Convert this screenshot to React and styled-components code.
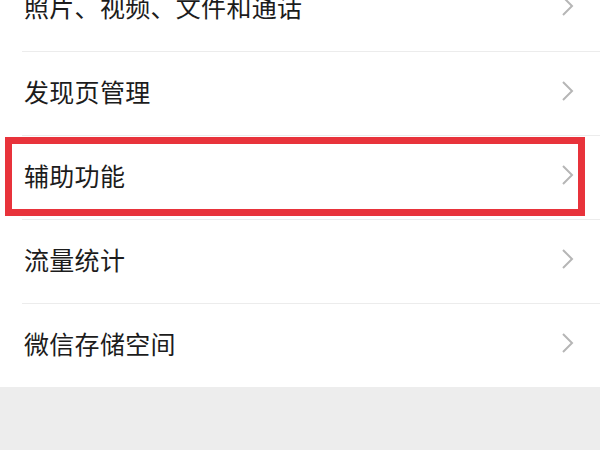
import styled, { createGlobalStyle } from "styled-components"

const GlobalStyle = createGlobalStyle`
    html, body {
        margin: 0;
        padding: 0;
        background: #ededed;
        font-family: "Noto Sans CJK SC", "Noto Sans", sans-serif;
    }
    #root {
        height: 450px;
        overflow: hidden;
    }
`

const StyledList = styled.ul`
    list-style: none;
    margin: -33px 0 0;
    padding: 0;
    background: #ffffff;
`

const StyledRow = styled.li`
    position: relative;
    display: flex;
    align-items: center;
    justify-content: space-between;
    height: 84px;
    padding: 0 26px 6px 24px;
    box-sizing: border-box;
    border-top: ${({ $first }) => ($first ? "none" : "1px solid transparent")};
    &::before {
        content: "";
        display: ${({ $first }) => ($first ? "none" : "block")};
        position: absolute;
        top: -1px;
        left: 22px;
        right: 0;
        height: 1px;
        background: #ececec;
    }
    ${({ $marked }) => $marked && `
        &::after {
            content: "";
            position: absolute;
            top: 1px;
            left: 5px;
            right: 15px;
            bottom: 3px;
            border: 7px solid #e8333b;
            pointer-events: none;
        }
    `}
`

const RowLabel = styled.span`
    font-size: 25px;
    font-weight: 400;
    color: #1c1c1c;
    letter-spacing: 0.3px;
`

const Chevron = styled.svg`
    width: 13px;
    height: 22px;
    flex-shrink: 0;
`

const items = [
    { label: "照片、视频、文件和通话" },
    { label: "发现页管理" },
    { label: "辅助功能", marked: true },
    { label: "流量统计" },
    { label: "微信存储空间" },
]

export default function App() {
    return (
        <>
            <GlobalStyle />
            <StyledList>
                {items.map((item, i) => (
                    <StyledRow key={item.label} $first={i === 0} $marked={item.marked}>
                        <RowLabel>{item.label}</RowLabel>
                        <Chevron viewBox="0 0 13 22">
                            <polyline points="2,2 11,11 2,20" fill="none" stroke="#b6b6b6" strokeWidth="2" />
                        </Chevron>
                    </StyledRow>
                ))}
            </StyledList>
        </>
    )
}
